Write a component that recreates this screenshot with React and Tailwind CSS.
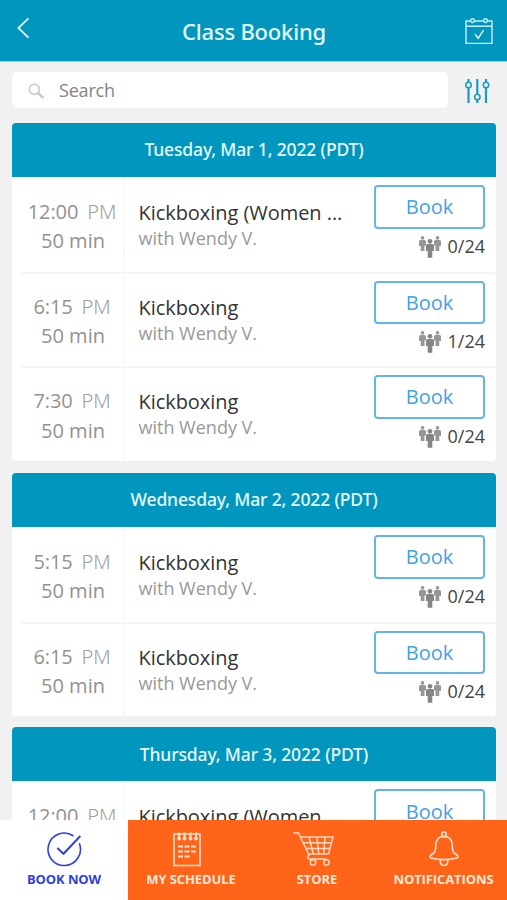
const days = [
  {
    date: "Tuesday, Mar 1, 2022 (PDT)",
    classes: [
      { time: "12:00", name: "Kickboxing (Women ...", spots: "0/24" },
      { time: "6:15", name: "Kickboxing", spots: "1/24" },
      { time: "7:30", name: "Kickboxing", spots: "0/24" },
    ],
  },
  {
    date: "Wednesday, Mar 2, 2022 (PDT)",
    classes: [
      { time: "5:15", name: "Kickboxing", spots: "0/24" },
      { time: "6:15", name: "Kickboxing", spots: "0/24" },
    ],
  },
  {
    date: "Thursday, Mar 3, 2022 (PDT)",
    classes: [{ time: "12:00", name: "Kickboxing (Women", spots: "0/24" }],
  },
];

function BackIcon() {
  return (
    <svg className="h-[22px] w-[14px]" viewBox="0 0 14 22" fill="none" stroke="#e6f9ff" strokeWidth="1.8">
      <path d="M12.4 1.4 2.4 11l10 9.6" />
    </svg>
  );
}

function CalendarCheckIcon() {
  return (
    <svg className="h-[28px] w-[28px]" viewBox="0 0 28 28" fill="none" stroke="#c4f0fb" strokeWidth="1.4">
      <path d="M5.5 4H1v22.400h26V4h-4.500M9.500 4h9M1 9.200h26" />
      <circle cx="7.500" cy="3.600" r="1.900" />
      <circle cx="20.500" cy="3.600" r="1.900" />
      <path d="m10 17.200 3.300 4 5.200-8" stroke="#e6f9ff" />
    </svg>
  );
}

function FilterIcon() {
  return (
    <svg className="h-[26px] w-[26px]" viewBox="0 0 26 26" fill="none" stroke="#1b9cc0" strokeWidth="2.200">
      <path d="M4.500 1v3.500M4.500 9.500V25M13.300 1v15.500M13.300 21.500V25M22 1v3.500M22 9.500V25" />
      <circle cx="4.500" cy="7" r="2.700" strokeWidth="1.600" />
      <circle cx="13.300" cy="19" r="2.700" strokeWidth="1.600" />
      <circle cx="22" cy="7" r="2.700" strokeWidth="1.600" />
    </svg>
  );
}

function SearchIcon() {
  return (
    <svg className="h-[16px] w-[16px]" viewBox="0 0 16 16" fill="none" stroke="#cbcbcb">
      <circle cx="6.300" cy="6.300" r="5.100" strokeWidth="1.600" />
      <path d="m10.300 10.200 4.300 4.100" strokeWidth="2.600" strokeLinecap="round" />
    </svg>
  );
}

function PeopleIcon() {
  return (
    <svg className="h-[22px] w-[22px]" viewBox="0 0 22 22" fill="#979797">
      <circle cx="3.500" cy="1.900" r="1.800" />
      <path d="M1.500 4h4q1.500 0 1.500 1.500V9.500H5.500V15H1.700V10H0V5.500Q0 4 1.500 4Z" />
      <circle cx="18.500" cy="1.900" r="1.800" />
      <path d="M16.500 4h4Q22 4 22 5.500V10h-1.700v5h-3.800V9.500H15V5.500Q15 4 16.500 4Z" />
      <circle cx="11" cy="5.300" r="2.400" fill="#858585" />
      <path d="M8.500 8h5Q15 8 15 9.700v5.300H13.300V21.800H8.700V15H7V9.700Q7 8 8.500 8Z" fill="#858585" />
    </svg>
  );
}

function BookIcon() {
  return (
    <svg className="h-[36px] w-[36px]" viewBox="0 0 36 36" fill="none" stroke="#2f3fe0">
      <path d="M27.500 5A16.200 16.200 0 1 0 33.300 12.300" strokeWidth="1.600" />
      <path d="m11.300 17 6.200 5.800L34.300 5" strokeWidth="2" />
    </svg>
  );
}

function ScheduleIcon() {
  return (
    <svg className="h-[36px] w-[30px]" viewBox="0 0 30 36" fill="none" stroke="#ffe3cf">
      <path d="M2 3h26v31.500H2Z" strokeWidth="1.500" />
      <path d="M7 1.500v6M12.500 1.500v6M18.500 1.500v6M24 1.500v6" strokeWidth="1.800" />
      <g fill="#ffe3cf" stroke="none">
        <circle cx="7" cy="7.500" r="1.900" />
        <circle cx="12.500" cy="7.500" r="1.900" />
        <circle cx="18.500" cy="7.500" r="1.900" />
        <circle cx="24" cy="7.500" r="1.900" />
      </g>
      <path d="M6 15.500h18M6 20.500h18M6 25.500h12" strokeWidth="1.800" strokeDasharray="5 1.500" />
    </svg>
  );
}

function CartIcon() {
  return (
    <svg className="h-[36px] w-[42px]" viewBox="0 0 42 36" fill="none" stroke="#ffd9bf" strokeWidth="1.500">
      <path d="M1 2h5.500L17 24q-2 2-.5 4M8.300 6H41l-4.500 17H16.500M10.500 11.800h29M13.500 17.500H38M17 6l4.300 17M25 6l1.700 17M33 6l-1.400 17M16.500 28h18" />
      <circle cx="21" cy="31.500" r="2.700" />
      <circle cx="34.500" cy="31.500" r="2.700" />
    </svg>
  );
}

function BellIcon() {
  return (
    <svg className="h-[36px] w-[32px]" viewBox="0 0 32 36" fill="none" stroke="#ffe3cf" strokeWidth="1.600">
      <circle cx="16" cy="3.300" r="2.300" />
      <path d="M16 5.500C10.500 5.500 7.800 9 7.800 14.500 7.800 20.500 6.500 22 3 24 1 25.500 2 27 4 27.300 11 28.800 21 28.800 28 27.300 30 27 31 25.500 29 24c-3.500-2-4.800-3.500-4.800-9.500 0-5.500-2.700-9-8.200-9Z" />
      <path d="M12.300 28.500v1.800c0 5.600 7.400 5.600 7.400 0v-1.800" />
    </svg>
  );
}

function ClassRow({ item, index }) {
  const first = index === 0;
  return (
    <div className={`flex shrink-0 ${index === 2 ? "h-[95px]" : "h-[94.500px]"}`}>
      <div className="w-[10px] shrink-0" />
      <div className={`flex grow ${first ? "" : "border-t-2 border-[#f4f5f5]"}`}>
        <div className={`flex w-[103px] shrink-0 flex-col items-center whitespace-nowrap border-r-2 border-[#f8fafa] text-[20px] leading-[29.500px] text-[#929292] ${first ? "pt-[19.500px]" : "pt-[18px]"}`}>
          <div className="flex gap-[9px] pr-px tracking-[-0.1px]">
            <span>{item.time}</span>
            <span className="font-['Noto_Sans'] font-light text-[#a0a0a0]">PM</span>
          </div>
          <div className="pl-px">50 min</div>
        </div>
        <div className={`grow whitespace-nowrap pl-[13.500px] ${first ? "pt-[22px]" : "pt-[20px]"}`}>
          <div className="text-[20px] leading-[27px] tracking-[-0.05px] text-[#333]">{item.name}</div>
          <div className="text-[18px] leading-[24px] text-[#999]">with Wendy V.</div>
        </div>
        <div className={`mr-[11px] w-[111px] shrink-0 ${first ? "pt-[8px]" : "pt-[7px]"}`}>
          <button className="flex h-[43.500px] w-full items-center justify-center rounded-[4px] border-2 border-[#62b5ea] pt-px text-[20px] text-[#3fa2e6]">
            Book
          </button>
          <div className="flex items-start justify-end gap-[7px] pt-[7px]">
            <PeopleIcon />
            <span className="text-[18px] leading-[20px] text-[#444]">{item.spots}</span>
          </div>
        </div>
      </div>
    </div>
  );
}

function NavItem({ icon, label, className }) {
  return (
    <div className={`flex flex-col items-center whitespace-nowrap pt-[11px] text-[13px] font-bold tracking-[-0.1px] ${className}`}>
      {icon}
      <span className="mt-[3px] leading-[18px]">{label}</span>
    </div>
  );
}

export default function App() {
  return (
    <div className="flex h-[900px] w-[507px] flex-col overflow-hidden bg-[#f1f1f1] font-['Open_Sans','Noto_Sans',sans-serif]">
      <header className="flex h-[62px] shrink-0 items-center justify-between border-b border-[#8fd3e5] bg-[#0096bd] pl-[16px] pr-[14px]">
        <div className="mb-[5px] w-[28px]"><BackIcon /></div>
        <h1 className="pr-px pt-[2px] font-['Noto_Sans'] text-[22px] font-medium tracking-[-0.2px] text-[#e6f9ff]">Class Booking</h1>
        <CalendarCheckIcon />
      </header>
      <div className="flex h-[61px] shrink-0 items-center pl-[12px]">
        <div className="mb-[5px] flex h-[36px] w-[436px] items-center rounded-[5px] bg-white pl-[16px]">
          <div className="pt-[2px]"><SearchIcon /></div>
          <span className="ml-[15px] text-[18px] leading-[24px] tracking-[-0.2px] text-[#858585]">Search</span>
        </div>
        <div className="mb-[3px] ml-[16px]"><FilterIcon /></div>
      </div>
      <main className="flex min-h-0 grow flex-col gap-[12px] overflow-hidden pl-[12px] pr-[11px]">
        {days.map((day) => (
          <section key={day.date} className="shrink-0 overflow-hidden rounded-[4px] bg-white last:-mt-[0.600px]">
            <h2 className="flex h-[54px] items-center justify-center bg-[#0096bd] pb-px font-['Noto_Sans'] text-[17.500px] font-medium tracking-[-0.14px] text-[#e6f9ff]">
              {day.date}
            </h2>
            {day.classes.map((item, i) => (
              <ClassRow key={item.time} item={item} index={i} />
            ))}
          </section>
        ))}
      </main>
      <nav className="flex h-[80px] shrink-0 bg-[#ff6418] text-[#ffe9db]">
        <NavItem icon={<BookIcon />} label="BOOK NOW" className="w-[128px] bg-white text-[#2f3fe0]" />
        <NavItem icon={<div className="pr-[8px]"><ScheduleIcon /></div>} label="MY SCHEDULE" className="w-[126px]" />
        <NavItem icon={<div className="pr-[9px]"><CartIcon /></div>} label="STORE" className="w-[126px]" />
        <NavItem icon={<BellIcon />} label="NOTIFICATIONS" className="w-[127px]" />
      </nav>
    </div>
  );
}
